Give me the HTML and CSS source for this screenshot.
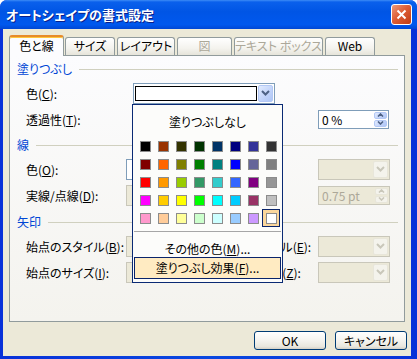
FILE: index.html
```html
<!DOCTYPE html>
<html lang="ja">
<head>
<meta charset="utf-8">
<title>オートシェイプの書式設定</title>
<link rel="stylesheet" href="styles.css">
</head>
<body>
<div class="window">
  <div class="titlebar">
    <span class="title">オートシェイプの書式設定</span>
    <span class="close"><svg width="11" height="11" viewBox="0 0 11 11"><path d="M1.5 1.5 L9.5 9.5 M9.5 1.5 L1.5 9.5" stroke="#fff" stroke-width="2" fill="none"/></svg></span>
  </div>
  <div class="client">
    <div class="tabs">
      <div class="tab active t-color">色と線</div>
      <div class="tab t-size">サイズ</div>
      <div class="tab t-layout">レイアウト</div>
      <div class="tab disabled t-pic">図</div>
      <div class="tab disabled t-text">テキスト ボックス</div>
      <div class="tab t-web">Web</div>
    </div>
    <div class="panel">
      <section class="group">
        <div class="group-head"><span>塗りつぶし</span><i class="rule"></i></div>
        <div class="row">
          <span class="lbl lbl-fill">色(<u>C</u>):</span>
          <div class="combo combo-fill"><span class="preview"></span><span class="drop"><svg width="9" height="6" viewBox="0 0 9 6"><path d="M1 1 L4.5 4.5 L8 1" stroke="#4D6185" stroke-width="2" fill="none"/></svg></span></div>
        </div>
        <div class="row">
          <span class="lbl">透過性(<u>T</u>):</span>
          <span class="gap-fill"></span>
          <div class="spin"><span class="val">0 %</span><span class="spin-btns"><span class="sb"><svg width="7" height="4" viewBox="0 0 7 4"><path d="M1 3.5 L3.5 1 L6 3.5" stroke="#4D6185" stroke-width="1.6" fill="none"/></svg></span><span class="sb"><svg width="7" height="4" viewBox="0 0 7 4"><path d="M1 0.5 L3.5 3 L6 0.5" stroke="#4D6185" stroke-width="1.6" fill="none"/></svg></span></span></div>
        </div>
      </section>
      <section class="group g-line">
        <div class="group-head"><span>線</span><i class="rule"></i></div>
        <div class="row">
          <span class="lbl">色(<u>O</u>):</span>
          <div class="combo combo-left"><span class="ctext"></span><span class="drop"><svg width="9" height="6" viewBox="0 0 9 6"><path d="M1 1 L4.5 4.5 L8 1" stroke="#4D6185" stroke-width="2" fill="none"/></svg></span></div>
          <span class="rlbl">スタイル(<u>S</u>):</span>
          <div class="combo combo-right disabled"><span class="ctext"></span><span class="drop"><svg width="9" height="6" viewBox="0 0 9 6"><path d="M1 1 L4.5 4.5 L8 1" stroke="#C9C7BA" stroke-width="2" fill="none"/></svg></span></div>
        </div>
        <div class="row">
          <span class="lbl">実線/点線(<u>D</u>):</span>
          <div class="combo combo-left disabled"><span class="ctext"></span><span class="drop"><svg width="9" height="6" viewBox="0 0 9 6"><path d="M1 1 L4.5 4.5 L8 1" stroke="#C9C7BA" stroke-width="2" fill="none"/></svg></span></div>
          <span class="rlbl">太さ(<u>W</u>):</span>
          <div class="spin spin-right disabled"><span class="val">0.75 pt</span><span class="spin-btns"><span class="sb"><svg width="7" height="4" viewBox="0 0 7 4"><path d="M1 3.5 L3.5 1 L6 3.5" stroke="#C9C7BA" stroke-width="1.6" fill="none"/></svg></span><span class="sb"><svg width="7" height="4" viewBox="0 0 7 4"><path d="M1 0.5 L3.5 3 L6 0.5" stroke="#C9C7BA" stroke-width="1.6" fill="none"/></svg></span></span></div>
        </div>
      </section>
      <section class="group g-arrow">
        <div class="group-head"><span>矢印</span><i class="rule"></i></div>
        <div class="row">
          <span class="lbl">始点のスタイル(<u>B</u>):</span>
          <div class="combo combo-left disabled"><span class="ctext"></span><span class="drop"><svg width="9" height="6" viewBox="0 0 9 6"><path d="M1 1 L4.5 4.5 L8 1" stroke="#C9C7BA" stroke-width="2" fill="none"/></svg></span></div>
          <span class="rlbl">終点のスタイル(<u>E</u>):</span>
          <div class="combo combo-right disabled"><span class="ctext"></span><span class="drop"><svg width="9" height="6" viewBox="0 0 9 6"><path d="M1 1 L4.5 4.5 L8 1" stroke="#C9C7BA" stroke-width="2" fill="none"/></svg></span></div>
        </div>
        <div class="row">
          <span class="lbl">始点のサイズ(<u>I</u>):</span>
          <div class="combo combo-left disabled"><span class="ctext"></span><span class="drop"><svg width="9" height="6" viewBox="0 0 9 6"><path d="M1 1 L4.5 4.5 L8 1" stroke="#C9C7BA" stroke-width="2" fill="none"/></svg></span></div>
          <span class="rlbl">終点のサイズ(<u>Z</u>):</span>
          <div class="combo combo-right disabled"><span class="ctext"></span><span class="drop"><svg width="9" height="6" viewBox="0 0 9 6"><path d="M1 1 L4.5 4.5 L8 1" stroke="#C9C7BA" stroke-width="2" fill="none"/></svg></span></div>
        </div>
      </section>

      <div class="popup">
        <div class="pop-none">塗りつぶしなし</div>
        <div class="palette">
          <span class="cell"><i class="sw" style="background:#000000"></i></span>
          <span class="cell"><i class="sw" style="background:#993300"></i></span>
          <span class="cell"><i class="sw" style="background:#333300"></i></span>
          <span class="cell"><i class="sw" style="background:#003300"></i></span>
          <span class="cell"><i class="sw" style="background:#003366"></i></span>
          <span class="cell"><i class="sw" style="background:#000080"></i></span>
          <span class="cell"><i class="sw" style="background:#333399"></i></span>
          <span class="cell"><i class="sw" style="background:#333333"></i></span>
          <span class="cell"><i class="sw" style="background:#800000"></i></span>
          <span class="cell"><i class="sw" style="background:#FF6600"></i></span>
          <span class="cell"><i class="sw" style="background:#808000"></i></span>
          <span class="cell"><i class="sw" style="background:#008000"></i></span>
          <span class="cell"><i class="sw" style="background:#008080"></i></span>
          <span class="cell"><i class="sw" style="background:#0000FF"></i></span>
          <span class="cell"><i class="sw" style="background:#666699"></i></span>
          <span class="cell"><i class="sw" style="background:#808080"></i></span>
          <span class="cell"><i class="sw" style="background:#FF0000"></i></span>
          <span class="cell"><i class="sw" style="background:#FF9900"></i></span>
          <span class="cell"><i class="sw" style="background:#99CC00"></i></span>
          <span class="cell"><i class="sw" style="background:#339966"></i></span>
          <span class="cell"><i class="sw" style="background:#33CCCC"></i></span>
          <span class="cell"><i class="sw" style="background:#3366FF"></i></span>
          <span class="cell"><i class="sw" style="background:#800080"></i></span>
          <span class="cell"><i class="sw" style="background:#969696"></i></span>
          <span class="cell"><i class="sw" style="background:#FF00FF"></i></span>
          <span class="cell"><i class="sw" style="background:#FFCC00"></i></span>
          <span class="cell"><i class="sw" style="background:#FFFF00"></i></span>
          <span class="cell"><i class="sw" style="background:#00FF00"></i></span>
          <span class="cell"><i class="sw" style="background:#00FFFF"></i></span>
          <span class="cell"><i class="sw" style="background:#00CCFF"></i></span>
          <span class="cell"><i class="sw" style="background:#993366"></i></span>
          <span class="cell"><i class="sw" style="background:#C0C0C0"></i></span>
          <span class="cell"><i class="sw" style="background:#FF99CC"></i></span>
          <span class="cell"><i class="sw" style="background:#FFCC99"></i></span>
          <span class="cell"><i class="sw" style="background:#FFFF99"></i></span>
          <span class="cell"><i class="sw" style="background:#CCFFCC"></i></span>
          <span class="cell"><i class="sw" style="background:#CCFFFF"></i></span>
          <span class="cell"><i class="sw" style="background:#99CCFF"></i></span>
          <span class="cell"><i class="sw" style="background:#CC99FF"></i></span>
          <span class="cell selected"><i class="sw" style="background:#FFFFFF"></i></span>
        </div>
        <div class="pop-sep"></div>
        <div class="pop-more">その他の色(<u>M</u>)...</div>
        <div class="pop-effect">塗りつぶし効果(<u>F</u>)...</div>
      </div>
    </div>
    <div class="buttons">
      <span class="btn">OK</span>
      <span class="btn">キャンセル</span>
    </div>
  </div>
</div>
</body>
</html>
```

FILE: styles.css
```css
* { box-sizing: border-box; }
html, body { margin: 0; padding: 0; }
body {
  width: 417px; height: 359px; overflow: hidden; background: #ffffff;
  font-family: "Noto Sans CJK JP", "Noto Sans", sans-serif;
  font-size: 12px; color: #000; font-feature-settings: "palt";
}
u { text-decoration: underline; text-underline-offset: 1px; }

.window {
  width: 417px; height: 359px; display: flex; flex-direction: column;
  background: linear-gradient(to right, #0831D9, #0A48E0 50%, #0831D9);
  border-radius: 7px 7px 0 0; overflow: hidden;
}
.titlebar {
  height: 29px; flex: none; display: flex; align-items: center; justify-content: space-between;
  padding: 0 5px 0 6px;
  background: linear-gradient(#3D8CF6 0, #0A60EC 2px, #0055E5 40%, #0058EE 85%, #0047D4 100%);
}
.title { color: #fff; font-weight: bold; font-size: 13px; text-shadow: 1px 1px 0 #0A1F8A; line-height: 1; }
.close {
  width: 21px; height: 21px; border: 1px solid #fff; border-radius: 3px;
  background: linear-gradient(135deg, #EE9A7A 0%, #DD5E36 45%, #C23B13 100%);
  display: flex; align-items: center; justify-content: center;
}

.client {
  flex: 1; margin: 0 6px 3px 3px; background: #ECE9D8;
  display: flex; flex-direction: column; padding: 6px 6px 0 6px;
}

.tabs { display: flex; align-items: flex-end; height: 20px; position: relative; z-index: 1; flex: none; }
.tab {
  height: 18px; border: 1px solid #919B9C; border-bottom: none; border-radius: 3px 3px 0 0;
  background: linear-gradient(#FFFFFF, #F4F3EE 60%, #E6E4DA);
  display: flex; align-items: center; justify-content: center; padding-bottom: 2px;
  margin-left: 2px; line-height: 1; white-space: nowrap;
}
.tab.active {
  height: 21px; margin-bottom: -1px; margin-left: 0;
  border-top: 2px solid #E68B2C; box-shadow: inset 0 1px 0 #FFC73C;
  background: #FCFCFE;
}
.tab.disabled { color: #ACA899; }
.t-color { width: 55px; }
.t-size { width: 50px; margin-left: 1px; }
.t-layout { width: 58px; }
.t-pic { width: 55px; }
.t-text { width: 89px; }
.t-web { width: 50px; }

.panel {
  position: relative; height: 267px; flex: none;
  border: 1px solid #919B9C;
  background: linear-gradient(#FCFCFE, #F4F3EE);
  padding: 6px 6px 0 7px;
}
.group-head { display: flex; align-items: center; height: 14px; color: #0046D5; line-height: 14px; }
.rule { flex: 1; height: 1px; background: #D0D0BF; margin-left: 7px; }
.group { display: flex; flex-direction: column; }
.g-line { margin-top: 6px; }
.g-arrow { margin-top: 7px; }
.group-head + .row { margin-top: 4px; }
.row { display: flex; align-items: center; height: 26px; padding-left: 9px; }
.lbl { width: 100px; flex: none; white-space: nowrap; }
.lbl-fill { width: 107px; }
.rlbl { width: 104px; flex: none; white-space: nowrap; overflow: hidden; }
.gap-fill { width: 192px; flex: none; }

.combo {
  height: 21px; border: 1px solid #7F9DB9; background: #fff; display: flex; flex: none;
}
.combo.disabled { border-color: #C9C7BA; background: #ECE9D8; }
.combo-fill { width: 142px; }
.combo-left { width: 88px; }
.combo-right { width: 72px; }
.preview { flex: 1; margin: 2px 1px 2px 1px; border: 1px solid #000; background: #fff; }
.ctext { flex: 1; padding-left: 3px; line-height: 19px; overflow: hidden; white-space: nowrap; }
.drop {
  width: 15px; margin: 1px 1px 1px 0; border: 1px solid #B3C8F5; border-radius: 2px;
  background: linear-gradient(135deg, #E2EBFE, #C0D2FA 60%, #AFC6F6);
  display: flex; align-items: center; justify-content: center;
}
.disabled .drop { border-color: #E8E6DA; background: #F4F3EC; }

.spin {
  width: 71px; height: 19px; border: 1px solid #7F9DB9; background: #fff;
  display: flex; flex: none;
}
.spin-right { width: 72px; }
.spin.disabled { border-color: #C9C7BA; background: #ECE9D8; color: #ACA899; }
.val { flex: 1; padding-left: 3px; line-height: 17px; white-space: nowrap; }
.spin-btns { width: 13px; display: flex; flex-direction: column; margin: 1px 1px 1px 0; gap: 1px; }
.sb {
  flex: 1; border: 1px solid #B3C8F5; border-radius: 2px;
  background: linear-gradient(135deg, #E2EBFE, #C0D2FA 60%, #AFC6F6);
  display: flex; align-items: center; justify-content: center;
}
.disabled .sb { border-color: #E8E6DA; background: #F4F3EC; }

.popup {
  position: absolute; left: 122px; top: 48px; width: 151px; height: 179px;
  border: 1px solid #0A2A74; background: #FCFCFA; z-index: 2;
  display: flex; flex-direction: column;
}
.pop-none { margin-top: 5px; height: 24px; line-height: 24px; text-align: center; }
.palette {
  display: grid; grid-template-columns: repeat(8, 18px); grid-auto-rows: 18px;
  margin: 3px 2px 0 3px;
}
.cell { display: block; padding: 4px 3px 3px 4px; }
.sw { display: block; width: 11px; height: 11px; border: 1px solid #8C8C8C; }
.cell.selected { border: 1px solid #0A246A; background: #FBD79C; padding: 3px 2px 2px 3px; }
.pop-sep { margin: 4px 1px 0; height: 1px; background: #A6A6A6; flex: none; }
.pop-more { height: 25px; padding-top: 9px; line-height: 16px; text-align: center; }
.pop-effect {
  margin: 0 1px; height: 22px; border: 1px solid #0A246A; background: #FFEBC2;
  line-height: 20px; text-align: center;
}

.buttons { display: flex; justify-content: flex-end; gap: 9px; margin-top: 9px; margin-right: -2px; }
.btn {
  width: 72px; height: 19px; border: 1px solid #003C74; border-radius: 3px;
  background: linear-gradient(#FFFFFF, #F6F5F1 45%, #E9E7DE 85%, #D6D0C5);
  display: flex; align-items: center; justify-content: center; line-height: 1;
}
```
